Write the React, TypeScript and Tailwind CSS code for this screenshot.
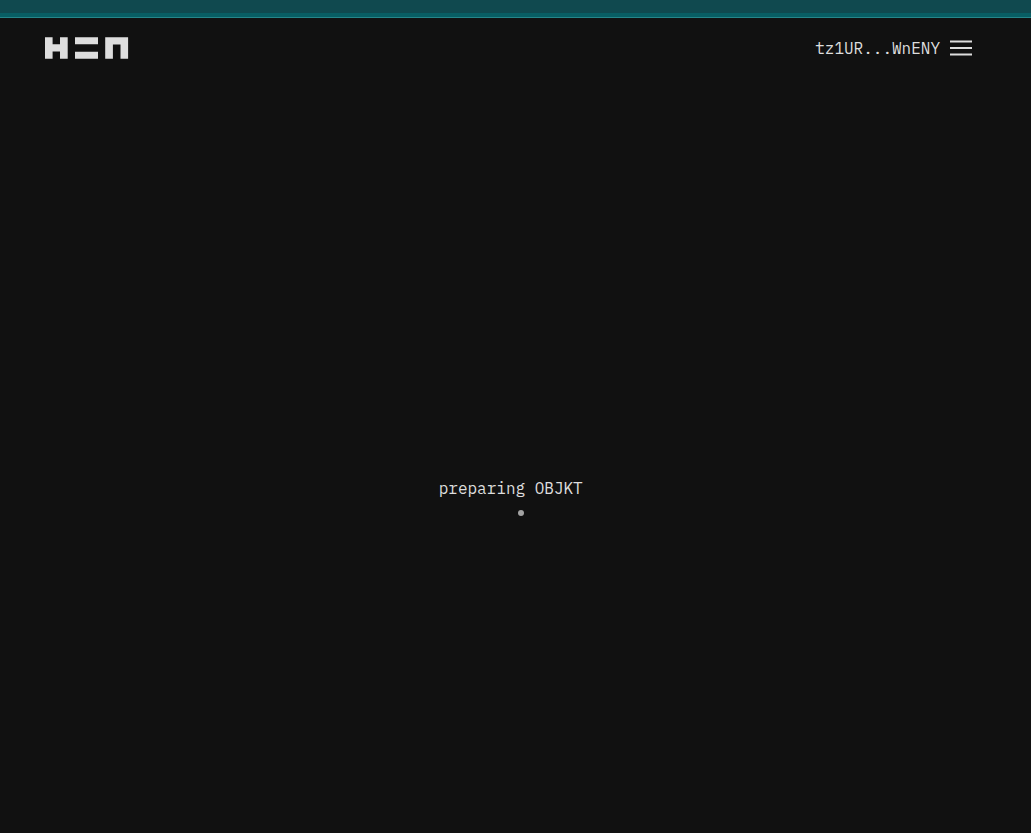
import React from 'react';

const Logo: React.FC = () => (
  <svg width="84" height="22" viewBox="0 0 84 22" fill="#dedede" aria-hidden="true">
    <path d="M0 .3h7.6v7h7.4v-7h7.7v21.4H15v-7.2H7.6v7.2H0z" />
    <path d="M30 .3h23v6.9H30zM30 14.7h23v7H30z" />
    <path d="M60.2 .3h22.9v21.4h-7.6V7.4h-7.6v14.3h-7.7z" />
  </svg>
);

const MenuIcon: React.FC = () => (
  <svg width="22" height="16" viewBox="0 0 22 16" fill="#dedede" aria-hidden="true">
    <path d="M0 .4h22v2.1H0zM0 7h22v2H0zM0 13.4h22v2.1H0z" />
  </svg>
);

const Header: React.FC<{ address: string }> = ({ address }) => (
  <header className="flex h-15 items-center justify-between pl-[45px] pr-[59px]">
    <a href="#" aria-label="Home">
      <Logo />
    </a>
    <div className="flex items-center gap-2.5">
      <button type="button">{address}</button>
      <button type="button" aria-label="Menu">
        <MenuIcon />
      </button>
    </div>
  </header>
);

const Loading: React.FC<{ message: string }> = ({ message }) => (
  <div className="flex flex-col items-center" role="status">
    <p>{message}&nbsp;</p>
    <div className="pl-[11px] pt-2.5">
      <div className="size-1.5 rounded-full bg-[#a3a3a3]" />
    </div>
  </div>
);

const App: React.FC = () => {
  return (
    <div className="flex min-h-screen flex-col bg-[#111111] font-['IBM_Plex_Mono','Liberation_Mono',monospace] text-base text-[#dedede]">
      <div className="h-[18px] border-b border-[#25868a] bg-[#10494f]">
        <div className="h-[13px]" />
        <div className="h-1 bg-[#085e64]" />
      </div>
      <Header address="tz1UR...WnENY" />
      <main className="flex flex-1 items-center justify-center pt-20">
        <Loading message="preparing OBJKT" />
      </main>
    </div>
  );
};

export default App;
